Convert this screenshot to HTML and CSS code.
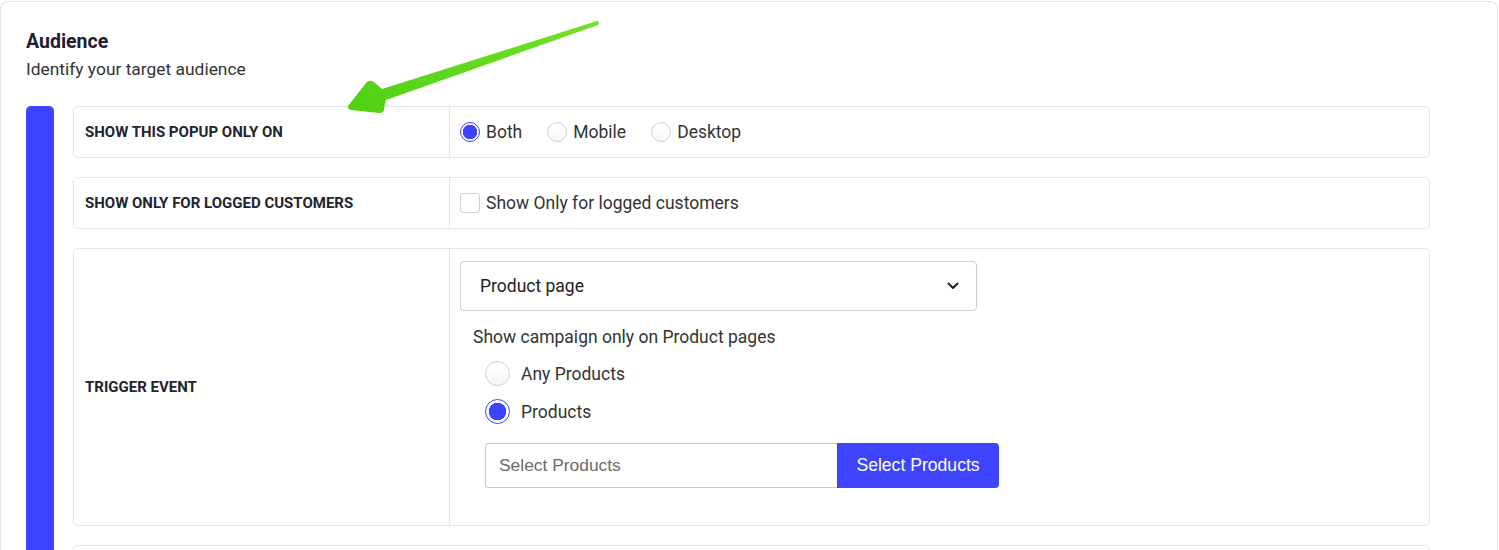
FILE: index.html
```html
<!DOCTYPE html>
<html>
<head>
<meta charset="utf-8">
<link rel="stylesheet" href="styles.css">
</head>
<body>
<div class="card">
  <div class="head">
    <h2 class="title">Audience</h2>
    <p class="subtitle">Identify your target audience</p>
  </div>
  <div class="body">
    <div class="bar"></div>
    <div class="rows">
      <div class="row">
        <div class="label">SHOW THIS POPUP ONLY ON</div>
        <div class="value inline">
          <label class="opt"><span class="radio checked"></span>Both</label>
          <label class="opt"><span class="radio"></span>Mobile</label>
          <label class="opt"><span class="radio"></span>Desktop</label>
        </div>
      </div>
      <div class="row">
        <div class="label">SHOW ONLY FOR LOGGED CUSTOMERS</div>
        <div class="value inline">
          <label class="opt"><span class="check"></span>Show Only for logged customers</label>
        </div>
      </div>
      <div class="row tall">
        <div class="label">TRIGGER EVENT</div>
        <div class="value stack">
          <div class="select">
            <span>Product page</span>
            <svg class="chev" width="12" height="8" viewBox="0 0 12 8"><path d="M1.5 1.5 L6 6 L10.5 1.5" fill="none" stroke="#222" stroke-width="2" stroke-linecap="round" stroke-linejoin="round"/></svg>
          </div>
          <div class="sub">
            <p class="subhead">Show campaign only on Product pages</p>
            <div class="biglist">
              <label class="opt big"><span class="radio lg"></span>Any Products</label>
              <label class="opt big"><span class="radio lg checked"></span>Products</label>
            </div>
            <div class="group">
              <div class="input">Select Products</div>
              <div class="btn">Select Products</div>
            </div>
          </div>
        </div>
      </div>
      <div class="row"></div>
    </div>
  </div>
  <svg class="arrow" width="620" height="130" viewBox="0 0 620 130">
    <defs>
      <linearGradient id="g" x1="0" y1="1" x2="1" y2="0">
        <stop offset="0" stop-color="#4fd112"/>
        <stop offset="1" stop-color="#74e02a"/>
      </linearGradient>
    </defs>
    <path d="M597,20 L382,88 L374,81 Q369,78 366,82 L348,105 Q347,108 351,109 L379,112 Q385,112 384,107 L386,99 L598,24 Q600,21 597,20 Z" fill="url(#g)"/>
  </svg>
</div>
</body>
</html>
```
FILE: styles.css
```css
* { box-sizing: border-box; }
html, body { margin: 0; padding: 0; background: #fff; }
body {
  font-family: Roboto, "Liberation Sans", Arial, sans-serif;
  color: #222;
  width: 1499px;
  height: 550px;
  overflow: hidden;
}
.card {
  position: relative;
  margin: 1px 1px 0 0;
  border: 1px solid #e3e5ef;
  border-bottom: none;
  border-radius: 8px 8px 0 0;
  padding: 28px 67px 0 25px;
  height: 549px;
  overflow: hidden;
}
.title {
  margin: 0;
  font-size: 19.5px;
  font-weight: 700;
  line-height: 24px;
  color: #1e2030;
}
.subtitle {
  margin: 4px 0 0;
  font-size: 17.4px;
  line-height: 22px;
  color: #333;
}
.body {
  display: flex;
  gap: 19px;
  margin-top: 26px;
}
.bar {
  width: 28px;
  flex: none;
  background: #3d44fb;
  border-radius: 5px 5px 0 0;
  min-height: 460px;
}
.rows {
  flex: 1;
  display: flex;
  flex-direction: column;
  gap: 19px;
}
.row {
  display: grid;
  grid-template-columns: 376px 1fr;
  border: 1px solid #e4e6ef;
  border-radius: 5px;
  min-height: 52px;
}
.row.tall { min-height: 278px; }
.label {
  display: flex;
  align-items: center;
  padding: 0 11px;
  border-right: 1px solid #e4e6ef;
  font-size: 15px;
  font-weight: 700;
  color: #23242e;
}
.value { padding: 0 10px; }
.inline {
  display: flex;
  align-items: center;
  gap: 25px;
}
.opt {
  display: flex;
  align-items: center;
  gap: 6px;
  font-size: 17.5px;
  color: #333;
}
.radio {
  width: 20px;
  height: 20px;
  border-radius: 50%;
  border: 1px solid #cfd0d6;
  background: linear-gradient(#fff, #f6f6f8);
  flex: none;
}
.radio.checked {
  border: 1px solid #3d44fb;
  background: radial-gradient(circle, #3d44fb 0 7px, #fff 7.5px);
}
.radio.lg { width: 25px; height: 25px; }
.radio.lg.checked { background: radial-gradient(circle, #3d44fb 0 8.5px, #fff 9px); }
.check {
  width: 20px;
  height: 20px;
  border: 1px solid #cfd0d6;
  border-radius: 3px;
  background: #fff;
  flex: none;
}
.stack {
  padding-top: 12px;
  padding-bottom: 36px;
}
.select {
  width: 517px;
  height: 50px;
  border: 1px solid #cdced4;
  border-radius: 4px;
  display: flex;
  align-items: center;
  justify-content: space-between;
  padding: 0 17px 0 19px;
  font-size: 17.5px;
  color: #222;
}
.sub { padding-left: 13px; }
.subhead {
  margin: 15px 0 0;
  font-size: 17.5px;
  line-height: 22px;
  color: #333;
}
.biglist {
  display: flex;
  flex-direction: column;
  gap: 13px;
  margin-top: 13px;
  padding-left: 12px;
}
.opt.big { gap: 11px; height: 25px; }
.group {
  display: flex;
  margin: 19px 0 0 12px;
  height: 45px;
}
.input {
  width: 352px;
  border: 1px solid #c9cad0;
  border-right: none;
  border-radius: 4px 0 0 4px;
  display: flex;
  align-items: center;
  padding-left: 13px;
  font-family: "Liberation Sans", Arial, sans-serif;
  font-size: 17.4px;
  color: #6b6b6b;
}
.btn {
  width: 162px;
  background: #3d44fb;
  color: #fff;
  border-radius: 0 4px 4px 0;
  display: flex;
  align-items: center;
  justify-content: center;
  font-family: "Liberation Sans", Arial, sans-serif;
  font-size: 17.6px;
}
.arrow {
  position: absolute;
  left: -1px;
  top: -1px;
  pointer-events: none;
}
```
